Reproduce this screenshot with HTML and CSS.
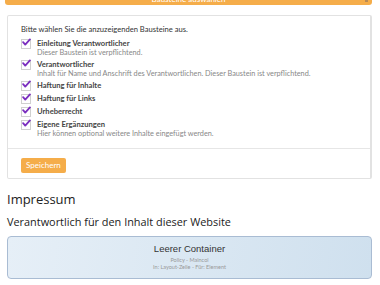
FILE: index.html
```html
<!DOCTYPE html>
<html lang="de">
<head>
<meta charset="utf-8">
<link rel="stylesheet" href="styles.css">
</head>
<body>
<div class="page">
  <div class="topbar"><span class="topbar-text">Bausteine auswählen</span><span class="topbar-icon"></span></div>
  <div class="card">
    <div class="card-body">
      <p class="intro">Bitte wählen Sie die anzuzeigenden Bausteine aus.</p>
      <div class="opt">
        <span class="box"><svg viewBox="0 0 10 10"><path d="M1.2 4.6 L3.6 7.4 L8.8 1.6" /></svg></span>
        <div class="opt-text"><div class="lbl">Einleitung Verantwortlicher</div><div class="desc">Dieser Baustein ist verpflichtend.</div></div>
      </div>
      <div class="opt">
        <span class="box"><svg viewBox="0 0 10 10"><path d="M1.2 4.6 L3.6 7.4 L8.8 1.6" /></svg></span>
        <div class="opt-text"><div class="lbl">Verantwortlicher</div><div class="desc">Inhalt für Name und Anschrift des Verantwortlichen. Dieser Baustein ist verpflichtend.</div></div>
      </div>
      <div class="opt">
        <span class="box"><svg viewBox="0 0 10 10"><path d="M1.2 4.6 L3.6 7.4 L8.8 1.6" /></svg></span>
        <div class="opt-text"><div class="lbl">Haftung für Inhalte</div></div>
      </div>
      <div class="opt">
        <span class="box"><svg viewBox="0 0 10 10"><path d="M1.2 4.6 L3.6 7.4 L8.8 1.6" /></svg></span>
        <div class="opt-text"><div class="lbl">Haftung für Links</div></div>
      </div>
      <div class="opt">
        <span class="box"><svg viewBox="0 0 10 10"><path d="M1.2 4.6 L3.6 7.4 L8.8 1.6" /></svg></span>
        <div class="opt-text"><div class="lbl">Urheberrecht</div></div>
      </div>
      <div class="opt">
        <span class="box"><svg viewBox="0 0 10 10"><path d="M1.2 4.6 L3.6 7.4 L8.8 1.6" /></svg></span>
        <div class="opt-text"><div class="lbl">Eigene Ergänzungen</div><div class="desc">Hier können optional weitere Inhalte eingefügt werden.</div></div>
      </div>
    </div>
    <div class="card-foot">
      <button class="btn">Speichern</button>
    </div>
  </div>
  <h1 class="h1">Impressum</h1>
  <h2 class="h2">Verantwortlich für den Inhalt dieser Website</h2>
  <div class="container-box">
    <div class="cb-title">Leerer Container</div>
    <div class="cb-sub">Policy - Maincol</div>
    <div class="cb-sub">In: Layout-Zeile - Für: Element</div>
  </div>
</div>
</body>
</html>
```
FILE: styles.css
```css
html, body {
  margin: 0;
  padding: 0;
  background: #ffffff;
}
body {
  font-family: "Lato", "Liberation Sans", sans-serif;
  color: #333333;
  overflow: hidden;
}
.page {
  padding: 0 8px 0 7px;
}
.topbar {
  height: 5px;
  margin: 0 0 0 -2px;
  background: #f5ad4a;
  border-radius: 0 0 3px 3px;
  position: relative;
  overflow: hidden;
  text-align: center;
  color: #ffffff;
  font-size: 8px;
  line-height: 0;
}
.topbar-text {
  display: inline-block;
  transform: translateY(-1px);
}
.topbar-icon {
  position: absolute;
  right: 4px;
  top: 0;
  width: 3px;
  height: 2px;
  background: #b88a55;
}
.card {
  margin-top: 10px;
  border: 1px solid #e2e2e2;
  border-right-width: 2px;
  border-radius: 2px;
}
.card-body {
  padding: 8px 13px 8px 13px;
  border-bottom: 1px solid #e6e6e6;
}
.intro {
  margin: 0 0 2.5px 0;
  font-size: 7.6px;
  line-height: 11px;
  color: #333;
}
.opt {
  display: flex;
  gap: 6px;
  margin-bottom: 2px;
}
.box {
  flex: none;
  width: 8px;
  height: 8px;
  margin-top: 1px;
  border: 1px solid #d0d0d0;
  background: #fff;
  position: relative;
}
.box svg {
  position: absolute;
  left: 0;
  top: -2px;
  width: 9px;
  height: 9px;
  fill: none;
  stroke: #7b2fbf;
  stroke-width: 2;
  stroke-linecap: round;
  stroke-linejoin: round;
}
.lbl {
  font-size: 7.6px;
  line-height: 10px;
  font-weight: 700;
  color: #444;
}
.desc {
  font-size: 7.3px;
  line-height: 9px;
  color: #888;
}
.card-foot {
  padding: 9px 13px 5px 13px;
}
.btn {
  display: block;
  border: none;
  background: #f5ad4a;
  color: #ffffff;
  font-family: inherit;
  font-size: 8px;
  height: 15px;
  padding: 0 5px;
  border-radius: 2px;
}
.h1 {
  font-family: "Open Sans", sans-serif;
  font-weight: 400;
  font-size: 13px;
  line-height: 18px;
  margin: 11px 0 0 0;
  color: #222;
}
.h2 {
  font-family: "Open Sans", sans-serif;
  font-weight: 400;
  font-size: 10.9px;
  line-height: 15px;
  margin: 6px 0 0 0;
  color: #222;
}
.container-box {
  margin-top: 7px;
  height: 43px;
  border: 1px solid #a9bcd3;
  border-radius: 4px;
  background: linear-gradient(100deg, #e6eff7 0%, #cfe0ee 100%);
  text-align: center;
  padding-top: 6px;
  box-sizing: border-box;
}
.cb-title {
  font-family: "Liberation Sans", sans-serif;
  font-size: 9.5px;
  line-height: 12px;
  color: #333;
  margin-bottom: 2px;
}
.cb-sub {
  font-size: 5.5px;
  line-height: 7px;
  color: #999;
}
```
